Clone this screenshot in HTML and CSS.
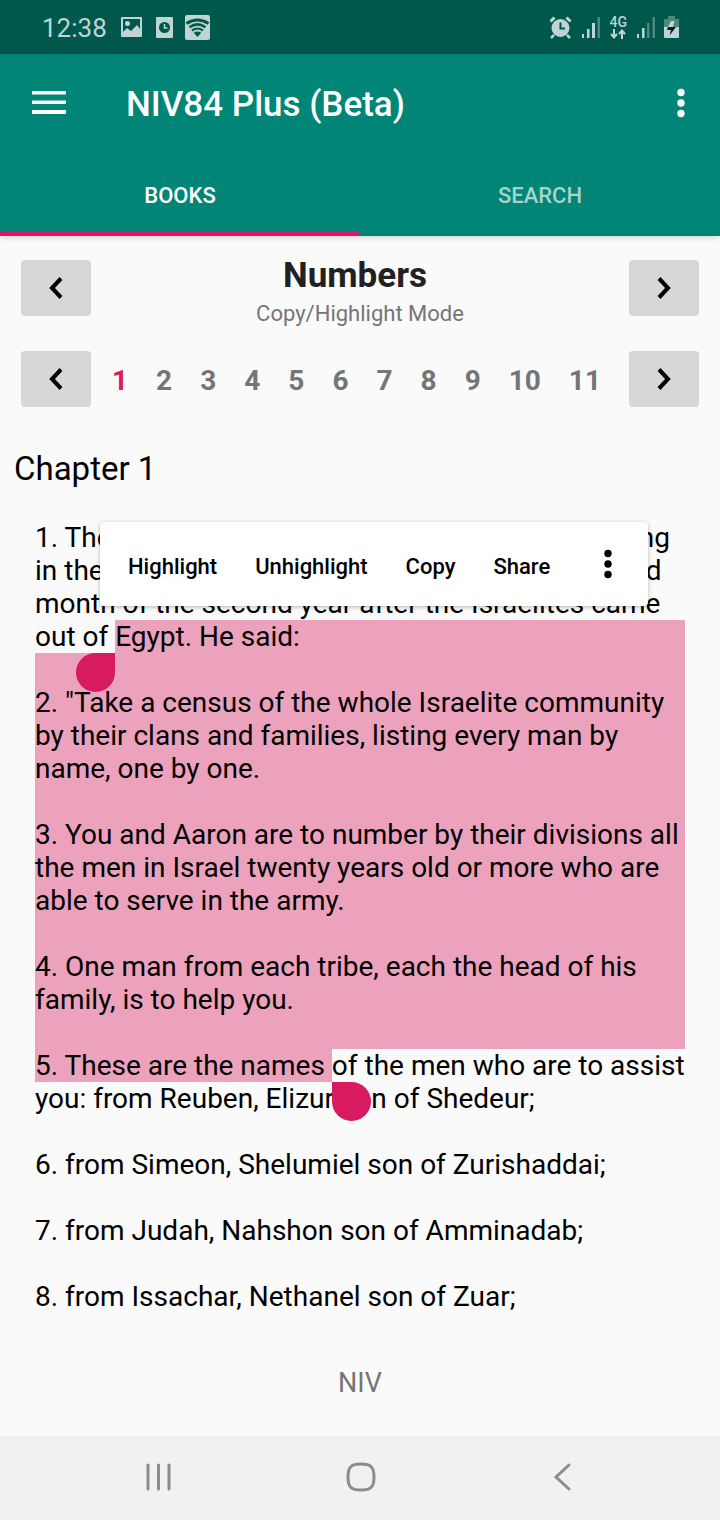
FILE: index.html
```html
<!DOCTYPE html>
<html lang="en">
<head>
<meta charset="utf-8">
<meta name="viewport" content="width=device-width, initial-scale=1">
<title>NIV84 Plus (Beta)</title>
<link rel="stylesheet" href="styles.css">
</head>
<body>
<div class="status">
  <time class="clock">12:38</time>
  <svg class="s-photo" width="22" height="20" viewBox="0 0 22 20" fill="currentColor"><path fill-rule="evenodd" d="M2 0h18a1 1 0 0 1 1 1v18a1 1 0 0 1-1 1H1a1 1 0 0 1-1-1V1a1 1 0 0 1 1-1zM2 2v13l4-4 4 3 6-6 3 4V2zM6.500 4a2.500 2.500 0 1 1 0 5 2.500 2.500 0 0 1 0-5z"/></svg>
  <svg class="s-doc" width="17" height="21" viewBox="0 0 17 21"><rect width="17" height="21" rx="1" fill="currentColor"/><circle cx="8.500" cy="10.500" r="5.500" fill="#00574b"/><path d="M8.500 7v4h3" fill="none" stroke="currentColor" stroke-width="1.500"/></svg>
  <svg class="s-wifi" width="25" height="25" viewBox="0 0 25 25"><rect width="25" height="25" rx="2" fill="currentColor"/><g fill="none" stroke="#00574b"><path d="M1.500 8.500Q12.500 1.500 23.500 8.500" stroke-width="3.200"/><path d="M4.500 12.300Q12.500 6.500 20.500 12.300" stroke-width="2.500"/><path d="M7 15.500Q12.500 11.500 18 15.500" stroke-width="2.200"/></g><path d="M8.800 17.800q3.700-2.500 7.400 0l-3.700 4.200z" fill="#00574b"/></svg>
  <div class="status-right">
    <svg width="23" height="23" viewBox="0 0 23 23"><circle cx="11.500" cy="12" r="9" fill="currentColor"/><path d="M5 19l-3 3M18 19l3 3" stroke="currentColor" stroke-width="2.500"/><path d="M1.500 5.500l4-4M21.500 5.500l-4-4" stroke="currentColor" stroke-width="3"/><path d="M11.500 6.500v6H16" fill="none" stroke="#00574b" stroke-width="2"/></svg>
    <svg width="18" height="21" viewBox="0 0 18 21" fill="currentColor"><path d="M0 17h2v4H0zM5 12h2.500v9H5zM10 6h3v15h-3z"/><path d="M15.500 0H18v21h-2.500z" opacity=".4"/></svg>
    <span class="net"><b>4G</b><svg width="16" height="10" viewBox="0 0 16 10" fill="none" stroke="currentColor" stroke-width="2"><path d="M4 0v8M1 5l3 3.500L7 5M12 10V2M9 5l3-3.500L15 5"/></svg></span>
    <svg width="18" height="21" viewBox="0 0 18 21" fill="currentColor"><path d="M0 17h2v4H0zM5 11h2.500v10H5z"/><path d="M10 6h2.500v15H10zM15.500 0H18v21h-2.500z" opacity=".4"/></svg>
    <svg width="15" height="22" viewBox="0 0 15 22"><path d="M4 0h7v3h4v8H0V3h4z" fill="currentColor" opacity=".4"/><path d="M0 11h15v10a1 1 0 0 1-1 1H1a1 1 0 0 1-1-1z" fill="currentColor"/><path d="M4 11h8L5.500 19.500 7 14H3z" fill="#07211d"/><path d="M7 5h3.500L9 11H4z" fill="currentColor"/></svg>
  </div>
</div>

<header class="appbar">
  <div class="toolbar">
    <button class="icon-btn" aria-label="Menu"><svg width="34" height="24" viewBox="0 0 34 24" fill="currentColor"><path d="M0 0h34v3.500H0zM0 9.500h34V13H0zM0 19h34v4H0z"/></svg></button>
    <h1 class="title">NIV84 Plus (Beta)</h1>
    <button class="icon-btn" aria-label="More options"><svg width="8" height="30" viewBox="0 0 8 30" fill="currentColor"><circle cx="4" cy="4.500" r="3.700"/><circle cx="4" cy="15" r="3.700"/><circle cx="4" cy="25.500" r="3.700"/></svg></button>
  </div>
  <nav class="tabs">
    <button class="tab tab-active">BOOKS</button>
    <button class="tab">SEARCH</button>
  </nav>
</header>

<main class="page">
  <div class="picker">
    <button class="step" aria-label="Previous book"><svg width="14" height="22" viewBox="0 0 14 22"><path d="M12 1.500L3 11l9 9.500" /></svg></button>
    <div class="book">
      <h2 class="book-name">Numbers</h2>
      <p class="mode">Copy/Highlight Mode</p>
    </div>
    <button class="step" aria-label="Next book"><svg width="14" height="22" viewBox="0 0 14 22"><path d="M2 1.500L11 11l-9 9.500" /></svg></button>
  </div>
  <div class="picker">
    <button class="step" aria-label="Previous chapter"><svg width="14" height="22" viewBox="0 0 14 22"><path d="M12 1.500L3 11l9 9.500" /></svg></button>
    <div class="chapters">
      <button class="chap chap-on">1</button><button class="chap">2</button><button class="chap">3</button><button class="chap">4</button><button class="chap">5</button><button class="chap">6</button><button class="chap">7</button><button class="chap">8</button><button class="chap">9</button><button class="chap">10</button><button class="chap">11</button>
    </div>
    <button class="step" aria-label="Next chapter"><svg width="14" height="22" viewBox="0 0 14 22"><path d="M2 1.500L11 11l-9 9.500" /></svg></button>
  </div>

  <h3 class="chapter-title">Chapter 1</h3>
  <article class="verses">
    <p class="verse sel-start">1. The LORD spoke to Moses in the Tent of Meeting in the Desert of Sinai on the first day of the second month of the second year after the Israelites came out of <mark class="sel sel-tail"><span class="handle handle-start"></span>Egypt. He said:</mark></p>
    <p class="verse sel-all sel-first">2. "Take a census of the whole Israelite community by their clans and families, listing every man by name, one by one.</p>
    <p class="verse sel-all">3. You and Aaron are to number by their divisions all the men in Israel twenty years old or more who are able to serve in the army.</p>
    <p class="verse sel-all">4. One man from each tribe, each the head of his family, is to help you.</p>
    <p class="verse"><mark class="sel">5. These are the names </mark><span class="anchor"><span class="handle handle-end"></span></span>of the men who are to assist you: from Reuben, Elizur son of Shedeur;</p>
    <p class="verse">6. from Simeon, Shelumiel son of Zurishaddai;</p>
    <p class="verse">7. from Judah, Nahshon son of Amminadab;</p>
    <p class="verse">8. from Issachar, Nethanel son of Zuar;</p>
    <div class="popup" role="toolbar">
      <button class="action">Highlight</button>
      <button class="action">Unhighlight</button>
      <button class="action">Copy</button>
      <button class="action">Share</button>
      <button class="action more" aria-label="More"><svg width="8" height="30" viewBox="0 0 8 30" fill="currentColor"><circle cx="4" cy="4.500" r="3.700"/><circle cx="4" cy="15" r="3.700"/><circle cx="4" cy="25.500" r="3.700"/></svg></button>
    </div>
  </article>
  <p class="version">NIV</p>
</main>

<nav class="sysnav">
  <button class="nav-btn" aria-label="Recent apps"><svg width="30" height="30" viewBox="0 0 30 30"><path d="M4 3v24M14.500 3v24M25 3v24"/></svg></button>
  <button class="nav-btn" aria-label="Home"><svg width="30" height="30" viewBox="0 0 30 30"><path d="M15 2C25 2 28 5 28 15S25 28 15 28 2 25 2 15 5 2 15 2z"/></svg></button>
  <button class="nav-btn" aria-label="Back"><svg width="30" height="30" viewBox="0 0 30 30"><path d="M22 3L9 15l13 12"/></svg></button>
</nav>
</body>
</html>
```
FILE: styles.css
```css
* { box-sizing: border-box; }

body {
  margin: 0;
  min-height: 100vh;
  display: flex;
  flex-direction: column;
  background: #fafafa;
  color: #000;
  font-family: Roboto, "Liberation Sans", sans-serif;
}

button {
  margin: 0;
  padding: 0;
  border: 0;
  background: none;
  color: inherit;
  font: inherit;
  line-height: inherit;
}

h1, h2, h3, p { margin: 0; }
svg { display: block; flex: none; }

.status {
  height: 54px;
  display: flex;
  align-items: center;
  padding: 0 41px 0 42px;
  background: #00574b;
  color: #bfd5d2;
}
.clock { font-size: 26px; line-height: 54px; margin-top: 2px; }
.s-photo { margin-left: 14px; }
.s-doc { margin-left: 13px; }
.s-wifi { margin-left: 12px; }
.status-right {
  margin-left: auto;
  display: flex;
  align-items: center;
  gap: 10px;
}
.net { display: grid; justify-items: center; }
.net b { font-size: 14px; line-height: 13px; font-weight: 500; }
.net + svg { margin-right: -1px; }

.appbar {
  position: relative;
  background: #008577;
  color: #fff;
  box-shadow: 0 1px 6px rgba(0, 0, 0, .18);
}
.toolbar {
  height: 98px;
  display: flex;
  align-items: center;
  padding: 0 35px 0 32px;
}
.title {
  flex: 1;
  margin-left: 60px;
  padding-top: 3px;
  font-size: 35px;
  line-height: 40px;
  font-weight: 500;
}
.tabs { display: flex; }
.tab {
  flex: 1;
  height: 84px;
  padding-top: 6px;
  border-bottom: 4px solid transparent;
  font-size: 22px;
  font-weight: 500;
  color: #a6d3ce;
}
.tab-active { color: #fff; border-color: #d81b60; }

.page {
  flex: 1;
  display: flex;
  flex-direction: column;
}
.picker {
  display: flex;
  padding: 0 21px;
  margin-top: 24px;
}
.picker + .picker { margin-top: 35px; }
.step {
  flex: none;
  width: 70px;
  height: 56px;
  display: grid;
  place-items: center;
  border-radius: 4px;
  background: #d6d7d7;
}
.step path { fill: none; stroke: #000; stroke-width: 4; }
.book {
  flex: 1;
  height: 56px;
  text-align: center;
}
.book-name {
  margin-top: -4px;
  padding-right: 10px;
  font-size: 35px;
  line-height: 40px;
  font-weight: 700;
  color: #212121;
}
.mode {
  margin-top: 5px;
  font-size: 22px;
  line-height: 26px;
  color: #757575;
}
.chapters {
  flex: 1;
  display: flex;
  margin: 0 7px;
  overflow: hidden;
}
.chap {
  flex: none;
  padding: 2px 14px 0;
  font-size: 28px;
  font-weight: 700;
  color: #757575;
}
.chap-on { color: #d81b60; }

.chapter-title {
  margin: 42px 14px 0;
  font-size: 33px;
  line-height: 40px;
  font-weight: 400;
}
.verses {
  position: relative;
  margin: 32px 35px 0;
  font-size: 28px;
  line-height: 33px;
}
.verse { padding-bottom: 33px; }
.sel { background: #eca2bd; color: inherit; }
.sel-all { background: #eca2bd; }
.sel-start { position: relative; overflow-x: clip; z-index: 1; padding-bottom: 0; }
.sel-first { padding-top: 33px; }
.sel-tail::after {
  content: "";
  position: absolute;
  width: 100%;
  height: 33px;
  background: #eca2bd;
}
.handle {
  position: absolute;
  width: 39px;
  height: 39px;
  background: #d81b60;
}
.handle-start {
  margin: 33px 0 0 -39px;
  border-radius: 50% 0 50% 50%;
}
.handle-end {
  margin-top: 33px;
  border-radius: 0 50% 50% 50%;
}

.popup {
  position: absolute;
  z-index: 2;
  top: 1px;
  left: 65px;
  right: 37px;
  height: 84px;
  display: flex;
  align-items: center;
  gap: 38px;
  padding: 0 36px 0 28px;
  border-radius: 4px;
  background: #fff;
  box-shadow: 0 1px 4px rgba(0, 0, 0, .28);
}
.action {
  height: 84px;
  padding-top: 4px;
  font-size: 22px;
  font-weight: 500;
}
.more { margin-left: auto; padding: 0; }

.version {
  margin-top: 22px;
  text-align: center;
  font-size: 27px;
  line-height: 30px;
  color: #757575;
}

.sysnav {
  height: 84px;
  display: flex;
  justify-content: space-between;
  align-items: center;
  padding: 0 143px 3px 144px;
  background: #f1f1f1;
}
.nav-btn path {
  fill: none;
  stroke: #8c8c8c;
  stroke-width: 3;
  stroke-linecap: round;
}
```
